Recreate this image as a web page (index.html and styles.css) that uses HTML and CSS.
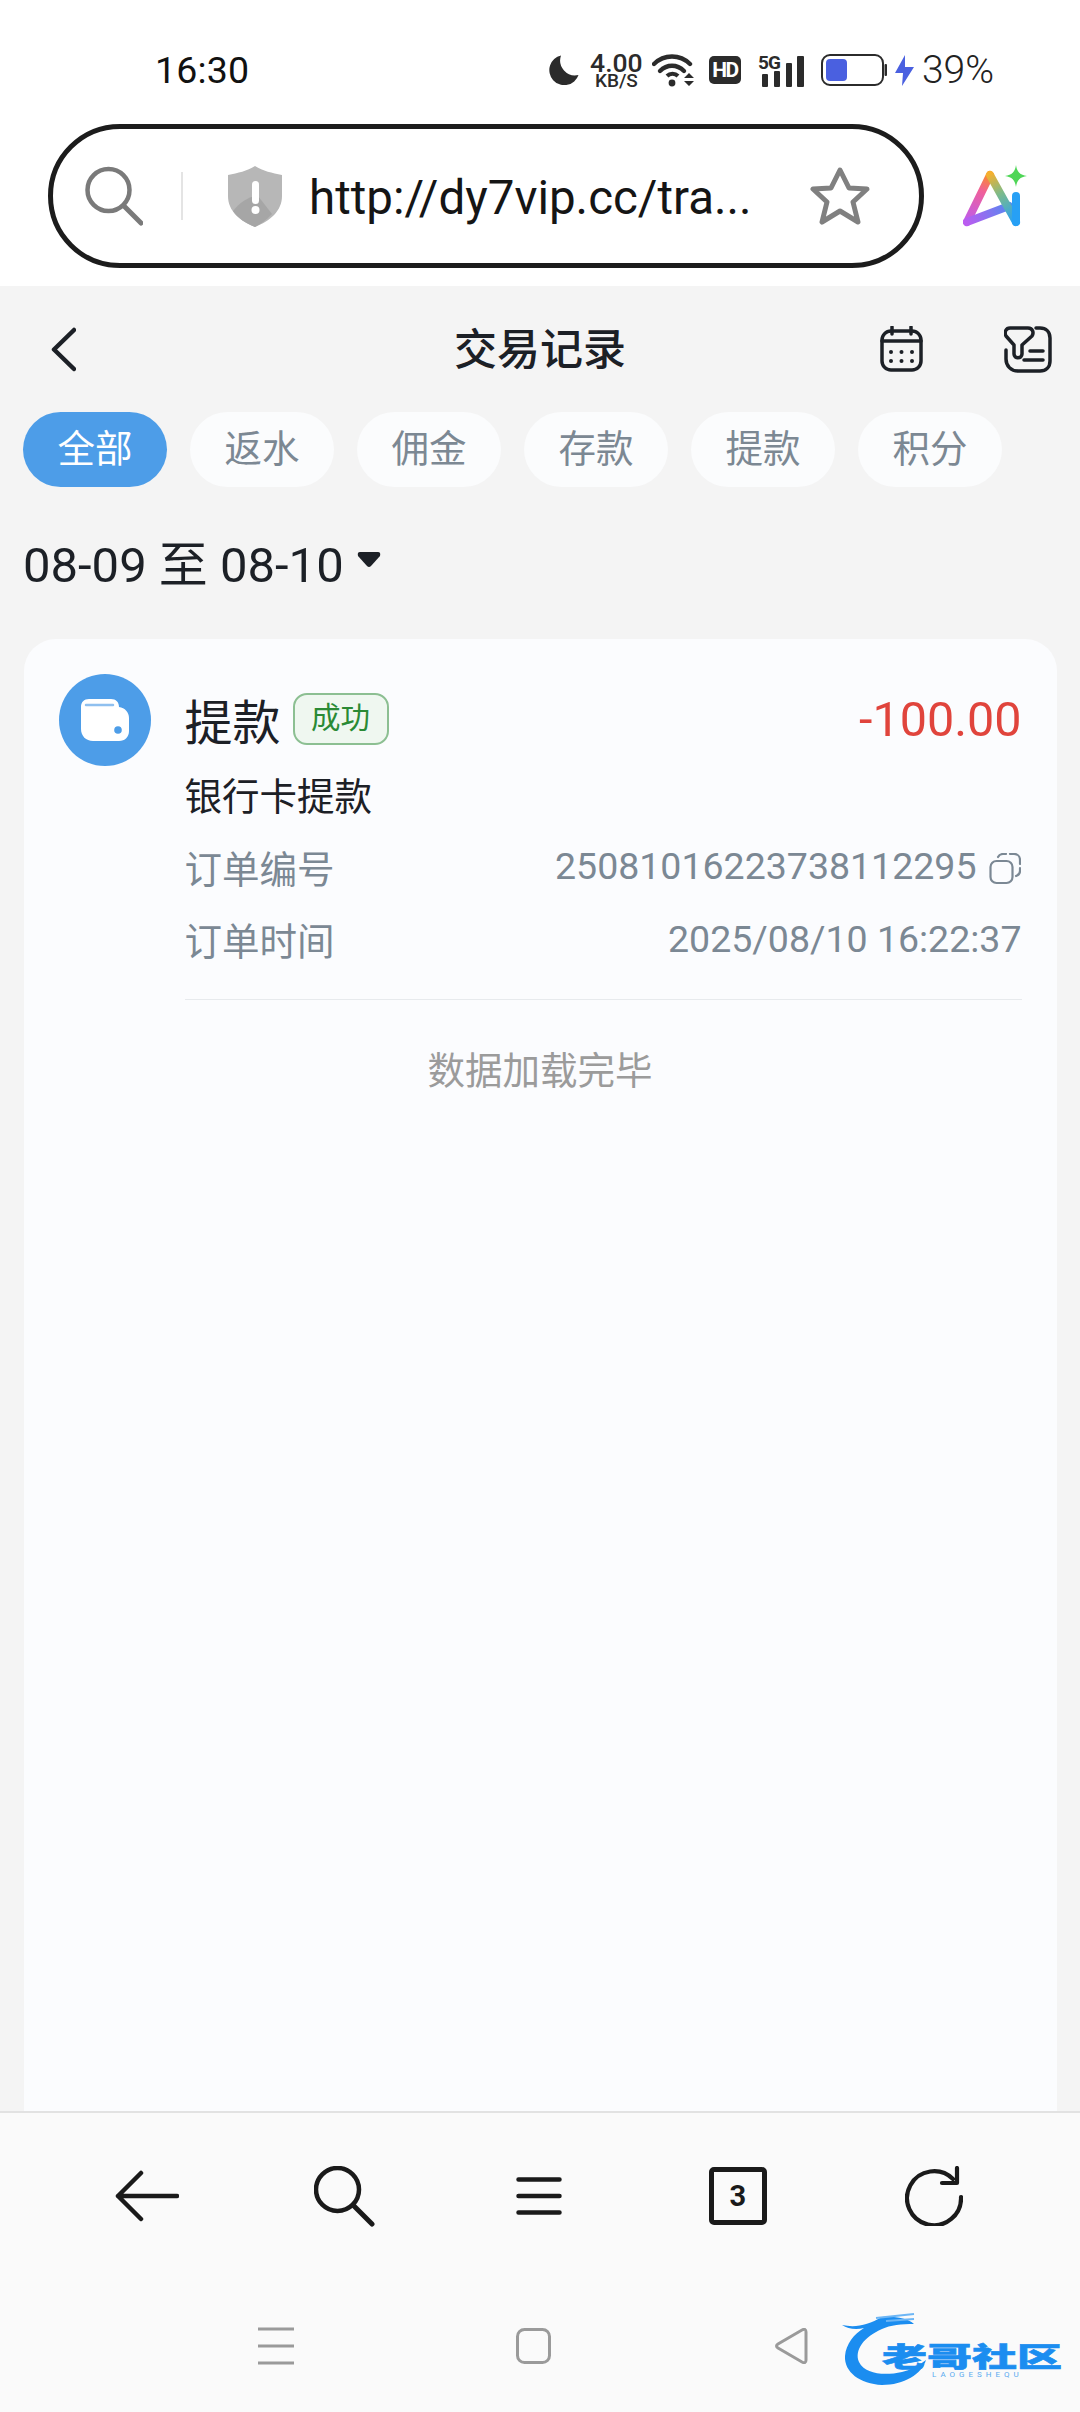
FILE: index.html
```html
<!DOCTYPE html>
<html lang="zh-CN">
<head>
<meta charset="utf-8">
<title>交易记录</title>
<link rel="stylesheet" href="styles.css">
</head>
<body>
<div class="screen">
  <header class="browser-top">
    <div class="status">
      <span class="clock">16:30</span>
      <div class="status-icons">
        <svg class="moon" width="30" height="30" viewBox="0 0 30 30"><path d="M12 0.5A15 15 0 1 0 29.5 20 A15 15 0 0 1 12 0.5Z" fill="#2b2b2b"/></svg>
        <div class="speed"><span class="speed-num">4.00</span><span class="speed-unit">KB/S</span></div>
        <svg class="wifi" width="44" height="34" viewBox="0 0 44 34"><g fill="none" stroke="#2b2b2b" stroke-width="4.4" stroke-linecap="round"><path d="M2 11C12 1 28 1 38 11"/><path d="M8 18C15 11 25 11 32 18"/></g><path d="M15 23C18 20 23 20 26 23" fill="none" stroke="#2b2b2b" stroke-width="4"/><circle cx="20" cy="30" r="3.4" fill="#2b2b2b"/><path d="M37 20L42 25H32ZM32 28H42L37 33Z" fill="#2b2b2b"/></svg>
        <span class="hd">HD</span>
        <svg class="signal" width="46" height="34" viewBox="0 0 46 34"><text class="five-g" x="0" y="16">5G</text><g fill="#2b2b2b"><rect x="4" y="21" width="6" height="13" rx="1"/><rect x="16" y="18" width="6" height="16" rx="1"/><rect x="28" y="10" width="6" height="24" rx="1"/><rect x="39" y="3" width="7" height="31" rx="1"/></g></svg>
        <svg class="battery" width="66" height="32" viewBox="0 0 66 32"><rect x="1" y="1" width="61" height="30" rx="8" fill="#fff" stroke="#2b2b2b" stroke-width="2"/><rect x="5" y="5" width="21" height="22" rx="4" fill="#4a60e0"/><rect x="63.500" y="10" width="2.500" height="12" rx="1" fill="#2b2b2b"/></svg>
        <svg class="bolt" width="19" height="31" viewBox="0 0 19 31"><path d="M10 0L0 18H8L7 31L19 12H10Z" fill="#4a60e0"/></svg>
        <span class="battery-pct">39%</span>
      </div>
    </div>
    <div class="address-row">
      <div class="address">
        <svg class="addr-search" width="58" height="60" viewBox="0 0 58 60"><circle cx="23.500" cy="24" r="21" fill="none" stroke="#7a7a7a" stroke-width="4.500"/><path d="M39 40L56 57" stroke="#7a7a7a" stroke-width="5" stroke-linecap="round"/></svg>
        <span class="addr-divider"></span>
        <svg class="shield" width="54" height="61" viewBox="0 0 54 61"><path d="M27 0C35 5 44 7 54 9V30C54 45 42 55 27 61C12 55 0 45 0 30V9C10 7 19 5 27 0Z" fill="#b7b7b7"/><path d="M5 45C12 36 22 30 30 30L44 48C38 54 33 58 27 61C17 57 10 52 5 45Z" fill="#a6a6a6"/><rect x="24" y="15" width="7" height="23" rx="3.500" fill="#fff"/><circle cx="27.500" cy="44" r="4" fill="#fff"/></svg>
        <span class="url">http://dy7vip.cc/tra...</span>
        <svg class="star" width="60" height="60" viewBox="0 0 60 60"><path d="M30 4L39 22L57 23L43 36L48 56L30 45L12 56L17 36L3 23L21 22Z" fill="none" stroke="#808080" stroke-width="5" stroke-linejoin="round"/></svg>
      </div>
      <svg class="ai" width="64" height="64" viewBox="0 0 64 64">
        <defs>
          <linearGradient id="aiLeft" x1="27" y1="10" x2="3" y2="59" gradientUnits="userSpaceOnUse"><stop offset="0" stop-color="#fb8f1f"/><stop offset=".35" stop-color="#f0609a"/><stop offset="1" stop-color="#bb5cf0"/></linearGradient>
          <linearGradient id="aiBar" x1="3" y1="59" x2="50" y2="38" gradientUnits="userSpaceOnUse"><stop offset="0" stop-color="#bb5cf0"/><stop offset="1" stop-color="#4a8df0"/></linearGradient>
          <linearGradient id="aiDiag" x1="27" y1="10" x2="53" y2="58" gradientUnits="userSpaceOnUse"><stop offset="0" stop-color="#f5b02e"/><stop offset=".4" stop-color="#7dbb8a"/><stop offset="1" stop-color="#27a0f5"/></linearGradient>
        </defs>
        <g fill="none" stroke-width="8" stroke-linecap="round" stroke-linejoin="round">
          <path d="M27 11L4 58" stroke="url(#aiLeft)"/>
          <path d="M4 58L46 42" stroke="url(#aiBar)"/>
          <path d="M27 11L53 58" stroke="url(#aiDiag)"/>
          <path d="M53 32V58" stroke="#27a0f5"/>
        </g>
        <path d="M53 1C54 8 57 11 64 12C57 13 54 16 53 23C52 16 49 13 42 12C49 11 52 8 53 1Z" fill="#4fd657"/>
      </svg>
    </div>
  </header>

  <main class="page">
    <div class="title-row">
      <svg class="chevron" width="25" height="45" viewBox="0 0 25 45"><path d="M23 3L3 22.500L23 42" fill="none" stroke="#1c2026" stroke-width="4.500" stroke-linecap="round" stroke-linejoin="round"/></svg>
      <h1 class="title">交易记录</h1>
      <svg class="calendar" width="43" height="46" viewBox="0 0 43 46"><rect x="2" y="5" width="39" height="39" rx="9" fill="none" stroke="#1c2026" stroke-width="3.500"/><path d="M2 15H41M12 1V8M31 1V8" stroke="#1c2026" stroke-width="3.500" stroke-linecap="round"/><g fill="#1c2026"><circle cx="11" cy="26" r="2"/><circle cx="21.500" cy="26" r="2"/><circle cx="32" cy="26" r="2"/><circle cx="11" cy="35" r="2"/><circle cx="21.500" cy="35" r="2"/><circle cx="32" cy="35" r="2"/></g></svg>
      <svg class="filter" width="48" height="47" viewBox="0 0 48 47"><g fill="none" stroke="#1c2026" stroke-width="3.500" stroke-linecap="round" stroke-linejoin="round"><path d="M32 2H36C42 2 46 6 46 12V35C46 41 42 45 36 45H14C7 45 2 40 2 33V24"/><path d="M6 2H24C29 2 30 7 28 10L18 19V28C18 33 10 33 10 28V19L2 10C0 6 2 2 6 2Z"/><path d="M26 25H39M20 34H39"/></g></svg>
    </div>
    <nav class="tabs">
      <span class="tab tab-active">全部</span>
      <span class="tab">返水</span>
      <span class="tab">佣金</span>
      <span class="tab">存款</span>
      <span class="tab">提款</span>
      <span class="tab">积分</span>
    </nav>
    <div class="date-row">
      <span class="date-range">08-09 至 08-10</span>
      <svg class="caret" width="24" height="17" viewBox="0 0 24 17"><path d="M3 1H21Q24 1 23 5L14 15Q12 17 10 15L1 5Q0 1 3 1Z" fill="#1c2026"/></svg>
    </div>
    <section class="card">
      <div class="record">
        <svg class="record-icon" width="92" height="92" viewBox="0 0 92 92"><circle cx="46" cy="46" r="46" fill="#4d9de8"/><path d="M30 25H52C57 25 60 28 60 33C66 34 70 38 70 44V57C70 63 66 67 60 67H34C27 67 22 62 22 55V33C22 28 25 25 30 25Z" fill="#fff"/><path d="M27 31H54" stroke="#8fc0ef" stroke-width="2.500" stroke-linecap="round"/><circle cx="59" cy="56" r="3.800" fill="#4d9de8"/></svg>
        <div class="record-body">
          <div class="record-head">
            <span class="record-type">提款</span>
            <span class="badge">成功</span>
            <span class="amount">-100.00</span>
          </div>
          <div class="record-sub">银行卡提款</div>
          <div class="record-row row-order">
            <span class="label">订单编号</span>
            <span class="value">25081016223738112295</span>
            <svg class="copy" width="32" height="32" viewBox="0 0 32 32"><g fill="none" stroke="#7b8894" stroke-width="2.200" stroke-linecap="round"><rect x="1.500" y="8" width="22" height="22" rx="6"/><path d="M9 4C10 2 12 1 14 1H17M21 1H25C28 1 31 3 31 7V11M31 15V18C31 20 30 22 27 23"/></g></svg>
          </div>
          <div class="record-row row-time">
            <span class="label">订单时间</span>
            <span class="value">2025/08/10 16:22:37</span>
          </div>
        </div>
      </div>
      <p class="loaded">数据加载完毕</p>
    </section>
  </main>

  <footer class="browser-bottom">
    <div class="toolbar">
      <svg class="tb-back" width="64" height="52" viewBox="0 0 64 52"><path d="M62 26H3M26 3L3 26L26 49" fill="none" stroke="#1a1a1a" stroke-width="4.500" stroke-linecap="round" stroke-linejoin="round"/></svg>
      <svg width="61" height="61" viewBox="0 0 61 61"><circle cx="23.500" cy="23.500" r="21.500" fill="none" stroke="#1a1a1a" stroke-width="4.500"/><path d="M39 39L58 58" stroke="#1a1a1a" stroke-width="5" stroke-linecap="round"/></svg>
      <svg class="tb-menu" width="46" height="38" viewBox="0 0 46 38"><path d="M2.500 2.500H43.500M2.500 19H43.500M2.500 35.500H43.500" stroke="#1a1a1a" stroke-width="4.500" stroke-linecap="round"/></svg>
      <span class="tab-count">3</span>
      <svg width="58" height="60" viewBox="0 0 58 60"><path d="M48 13A27 27 0 1 0 56 31" fill="none" stroke="#1a1a1a" stroke-width="4.200" stroke-linecap="round"/><path d="M52 2V17H37" fill="none" stroke="#1a1a1a" stroke-width="4.200" stroke-linecap="round" stroke-linejoin="round"/></svg>
    </div>
    <div class="navbar">
      <svg width="36" height="38" viewBox="0 0 36 38"><path d="M0 2H36M0 19H36M0 36H36" stroke="#9a9a9a" stroke-width="3"/></svg>
      <svg width="35" height="36" viewBox="0 0 35 36"><rect x="1.500" y="1.500" width="32" height="33" rx="7" fill="none" stroke="#9a9a9a" stroke-width="3"/></svg>
      <svg width="34" height="36" viewBox="0 0 34 36"><path d="M32 4V32Q32 36 28 34L4 20Q1 18 4 16L28 2Q32 0 32 4Z" fill="none" stroke="#9a9a9a" stroke-width="3"/></svg>
    </div>
    <div class="watermark">
      <svg class="wm-dragon" width="120" height="74" viewBox="0 0 120 74"><path d="M0 13C14 16 26 13 40 5C52 4 66 6 72 12C60 12 48 13 40 17C22 25 12 38 17 50C23 62 42 64 60 60C68 58 76 54 84 48C80 62 62 73 40 73C18 72 2 60 3 44C4 32 12 22 22 16C14 18 6 17 0 13Z" fill="#1b8df0"/><path d="M34 6L72 2M44 9L72 7" stroke="#6db6f5" stroke-width="2"/></svg>
      <span class="wm-name">老哥社区</span>
      <span class="wm-sub">LAOGESHEQU</span>
    </div>
  </footer>
</div>
</body>
</html>
```

FILE: styles.css
```css
* { box-sizing: border-box; }
html, body { margin: 0; padding: 0; }
body {
  width: 1080px;
  height: 2412px;
  overflow: hidden;
  font-family: Roboto, "Noto Sans CJK SC", sans-serif;
  background: #f4f4f4;
}
svg { display: block; flex: none; }
.screen {
  position: relative;
  display: flex;
  flex-direction: column;
  width: 1080px;
  height: 2412px;
}

/* browser chrome */
.browser-top { background: #fff; height: 286px; flex: none; }
.status {
  display: flex;
  align-items: center;
  height: 124px;
  padding: 16px 86px 0 155px;
}
.clock { font-size: 37.500px; color: #111; letter-spacing: .2px; }
.status-icons { display: flex; align-items: center; margin-left: auto; color: #2b2b2b; }
.speed { display: flex; flex-direction: column; align-items: center; margin-left: 11px; width: 53px; }
.speed-num { font-size: 26.500px; line-height: 21px; font-weight: 500; }
.speed-unit { font-size: 19px; line-height: 15px; font-weight: 500; }
.wifi { margin-left: 9px; }
.hd {
  margin-left: 13px;
  width: 32px;
  height: 28px;
  border-radius: 5px;
  background: #2b2b2b;
  color: #fff;
  font-size: 21px;
  line-height: 28px;
  font-weight: 700;
  text-align: center;
  letter-spacing: -1.5px;
}
.signal { margin-left: 17px; overflow: visible; }
.five-g { font: 700 19px Roboto, sans-serif; fill: #2b2b2b; letter-spacing: -1px; }
.battery { margin-left: 17px; }
.bolt { margin-left: 8px; }
.battery-pct { margin-left: 8px; font-size: 39px; font-weight: 300; color: #222; }

.address-row { display: flex; align-items: center; height: 162px; padding-left: 48px; }
.address {
  display: flex;
  align-items: center;
  width: 876px;
  height: 144px;
  margin-bottom: 18px;
  border: 5px solid #1c1c1c;
  border-radius: 72px;
  background: #fff;
}
.addr-search { margin-left: 32px; }
.addr-divider { width: 2px; height: 48px; margin-left: 38px; background: #e4e4e4; }
.shield { margin-left: 45px; }
.url { margin-left: 27px; width: 440px; padding-top: 3px; font-size: 47.500px; color: #151515; white-space: nowrap; font-weight: 400; }
.star { margin-left: 61px; }
.ai { margin-left: 39px; margin-bottom: 18px; }

/* page */
.page { flex: 1; display: flex; flex-direction: column; min-height: 0; }
.title-row { display: flex; align-items: center; height: 126px; padding: 0 28px 0 51px; flex: none; }
.title {
  flex: 1;
  margin: 0;
  padding: 0 0 6px 124px;
  text-align: center;
  font-size: 43px;
  font-weight: 500;
  color: #1c2026;
}
.calendar { margin-right: 81px; }
.tabs { display: flex; gap: 23px; padding-left: 23px; flex: none; }
.tab {
  width: 144px;
  height: 75px;
  border-radius: 38px;
  background: #fbfcfd;
  color: #7c8893;
  font-size: 37.500px;
  line-height: 74px;
  text-align: center;
}
.tab-active { background: #4d9de8; color: #fff; }
.date-row { display: flex; align-items: center; gap: 13px; height: 152px; padding: 0 0 6px 23px; flex: none; }
.date-range { font-size: 49px; color: #1c2026; }
.caret { margin-top: -2px; }

.card {
  flex: 1;
  margin: 0 23.500px;
  padding: 35px 35px 0 35px;
  background: #fbfcfe;
  border-radius: 32px 32px 0 0;
}
.record { display: flex; gap: 34px; }
.record-body { flex: 1; min-width: 0; padding-bottom: 23px; border-bottom: 1px solid #e7eaed; }
.record-head { display: flex; align-items: center; height: 90px; }
.record-type { font-size: 48px; color: #1c2026; }
.badge {
  margin-left: 12px;
  width: 96px;
  height: 52px;
  border: 2px solid #8cbf92;
  border-radius: 14px;
  background: #eff7f0;
  color: #2a8a35;
  font-size: 29.500px;
  line-height: 47px;
  text-align: center;
}
.amount { margin-left: auto; font-size: 48.500px; color: #e0443c; }
.record-sub { height: 64px; padding-top: 1px; font-size: 37.500px; line-height: 64px; color: #1c2026; }
.record-row { display: flex; align-items: center; color: #7b8894; font-size: 37.500px; }
.row-order { height: 78px; padding-bottom: 2px; }
.row-time { height: 70px; padding-bottom: 5px; }
.label { margin-right: auto; }
.value { font-size: 37.500px; }
.copy { margin: 5px 1px 0 12px; }
.loaded { margin: 46px 0 0; text-align: center; font-size: 37.500px; line-height: 50px; color: #9b9b9b; }

/* bottom */
.browser-bottom { flex: none; height: 301px; background: #fafafa; border-top: 2px solid #e2e2e2; }
.toolbar {
  display: grid;
  grid-template-columns: repeat(5, 196.500px);
  justify-items: center;
  align-items: center;
  height: 166px;
  padding-left: 50px;
}
.tb-back { margin-right: 3px; }
.tb-menu { margin-right: 5px; }
.tab-count {
  width: 58px;
  height: 58px;
  border: 5px solid #1a1a1a;
  border-radius: 5px;
  font-size: 29px;
  font-weight: 700;
  line-height: 48px;
  text-align: center;
  color: #1a1a1a;
}
.navbar {
  display: grid;
  grid-template-columns: repeat(3, 257.500px);
  justify-items: center;
  align-items: center;
  height: 133px;
  padding-left: 147px;
}
.watermark { position: absolute; left: 842px; top: 2312px; width: 224px; height: 76px; }
.wm-dragon { position: absolute; left: 0; top: 0; }
.wm-name {
  position: absolute;
  left: 40px;
  top: 18px;
  width: 182px;
  font-size: 45px;
  line-height: 56px;
  font-weight: 900;
  color: #1b8df0;
  white-space: nowrap;
  transform: scaleY(.6);
  -webkit-text-stroke: 1px #1b8df0;
}
.wm-sub {
  position: absolute;
  left: 90px;
  top: 59px;
  font-size: 8px;
  line-height: 8px;
  letter-spacing: 4px;
  color: #5aaaf0;
  white-space: nowrap;
}
```
